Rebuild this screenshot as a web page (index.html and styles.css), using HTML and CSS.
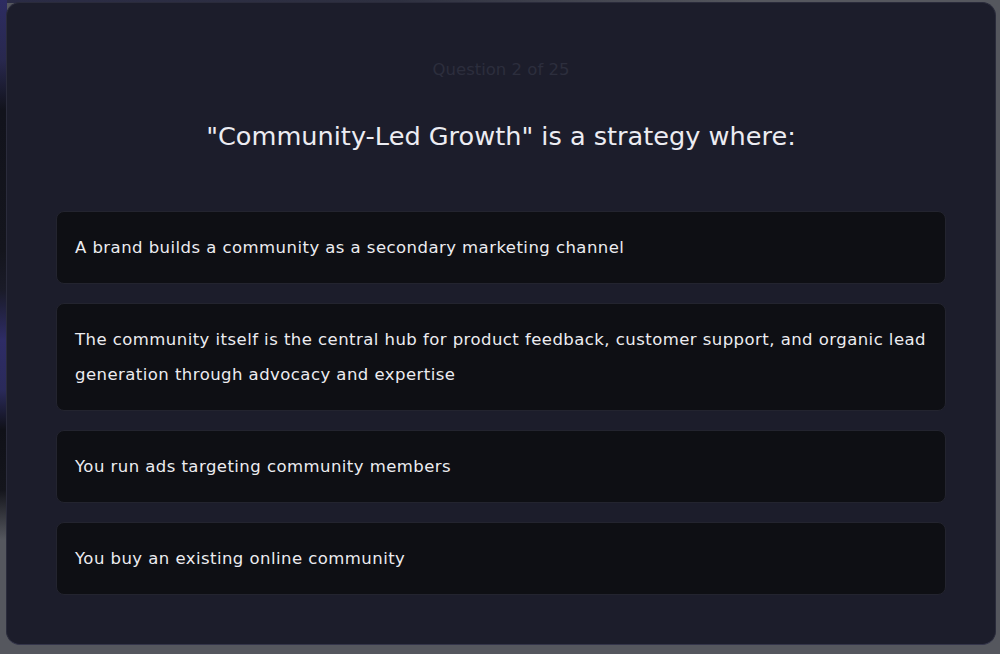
FILE: index.html
```html
<!DOCTYPE html>
<html lang="en">
<head>
<meta charset="utf-8">
<title>Quiz</title>
<link rel="stylesheet" href="styles.css">
</head>
<body>
<main class="quiz-card">
  <p class="quiz-progress">Question 2 of 25</p>
  <h1 class="quiz-question">"Community-Led Growth" is a strategy where:</h1>
  <ul class="quiz-options">
    <li class="quiz-option">A brand builds a community as a secondary marketing channel</li>
    <li class="quiz-option">The community itself is the central hub for product feedback, customer support, and organic lead generation through advocacy and expertise</li>
    <li class="quiz-option">You run ads targeting community members</li>
    <li class="quiz-option">You buy an existing online community</li>
  </ul>
</main>
</body>
</html>
```

FILE: styles.css
```css
* {
  box-sizing: border-box;
}

html, body {
  height: 100%;
}

body {
  margin: 0;
  padding: 2px 4px 9px 6px;
  background-color: #55575e;
  background-image:
    /* left backdrop strip: violet glows over dark */
    linear-gradient(180deg,
      #2d2c62 0px, #28284e 60px, #12131c 110px, #14151d 250px,
      #1a1b28 290px, #2e2c66 340px, #2a2a5a 390px, #101118 430px,
      #14151c 490px, #55575e 540px),
    /* top backdrop strip */
    linear-gradient(90deg, #2a2b45 0%, #2e3040 40%, #55575e 75%);
  background-size: 7px 100%, 100% 3px;
  background-position: 0 0, 0 0;
  background-repeat: no-repeat;
  font-family: "DejaVu Sans", "Open Sans", sans-serif;
}

.quiz-card {
  height: 643px;
  background: #1c1d2b;
  border: 1px solid #2a2b3b;
  border-bottom-color: #34354a;
  border-radius: 14px;
  padding: 54px 49px 50px;
  display: flex;
  flex-direction: column;
}

.quiz-progress {
  margin: 0;
  text-align: center;
  font-size: 16.5px;
  line-height: 26px;
  color: #2c2e3d;
}

.quiz-question {
  margin: 36px 0 0;
  text-align: center;
  font-size: 25.6px;
  font-weight: 400;
  line-height: 34px;
  color: #ececf2;
}

.quiz-options {
  list-style: none;
  margin: 58px 0 0;
  padding: 0;
  display: flex;
  flex-direction: column;
  gap: 19px;
}

.quiz-option {
  background: #0e0f14;
  border: 1px solid #23242f;
  border-radius: 8px;
  padding: 18px 18px;
  font-size: 16.5px;
  letter-spacing: 0.45px;
  line-height: 35px;
  color: #ececf0;
}
```
